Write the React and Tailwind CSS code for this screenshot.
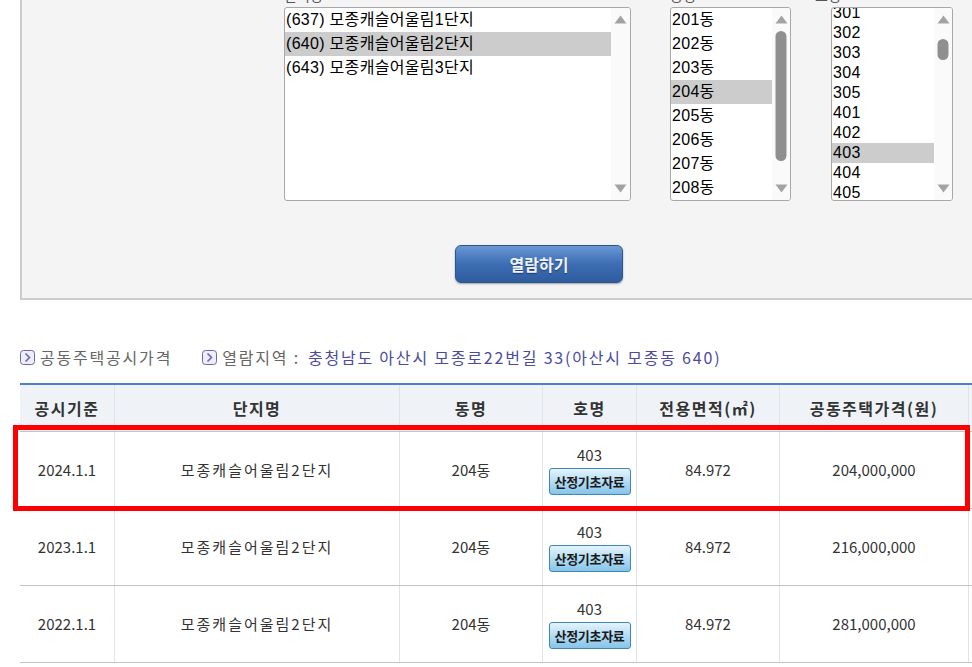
import React from "react";

const KR = { fontFamily: '"Liberation Sans", "Noto Sans CJK KR", sans-serif' };
const KR2 = { fontFamily: '"Noto Sans CJK KR", "Liberation Sans", sans-serif' };

function Up() {
  return (
    <svg width="13" height="9" viewBox="0 0 13 9">
      <polygon points="6.5,0.5 12.5,8.5 0.5,8.5" fill="#a3a3a3" />
    </svg>
  );
}
function Down() {
  return (
    <svg width="13" height="9" viewBox="0 0 13 9">
      <polygon points="0.5,0.5 12.5,0.5 6.5,8.5" fill="#a3a3a3" />
    </svg>
  );
}

function ListBox({ width, contentW, items, rowH, selected, offset = 0, thumb }) {
  return (
    <div
      className="relative flex h-[194px] overflow-hidden rounded-[3px] border border-[#a8a8a8] bg-white"
      style={{ width }}
    >
      <div className="overflow-hidden" style={{ width: contentW }}>
        <div style={{ marginTop: -offset }}>
          {items.map((it) => (
            <div
              key={it}
              className={`whitespace-nowrap pl-px text-[16px] tracking-[0.3px] text-black ${it === selected ? "bg-[#cccccc]" : ""}`}
              style={{ height: rowH, lineHeight: rowH + "px", ...KR }}
            >
              {it}
            </div>
          ))}
        </div>
      </div>
      <div className="relative flex flex-1 flex-col items-center justify-between bg-[#fafafa] py-[7px]">
        <Up />
        {thumb && (
          <div
            className="absolute left-1/2 w-[11px] -translate-x-1/2 rounded-full bg-[#8f8f8f]"
            style={{ top: thumb[0], height: thumb[1] }}
          />
        )}
        <Down />
      </div>
    </div>
  );
}

function TitleIcon() {
  return (
    <svg width="15" height="15" viewBox="0 0 15 15" className="shrink-0">
      <rect x="0.5" y="0.5" width="14" height="14" rx="3" fill="#eeeefa" stroke="#6c66b0" />
      <polyline points="5.5,3.5 9.5,7.5 5.5,11.5" fill="none" stroke="#6c66b0" strokeWidth="1.6" />
    </svg>
  );
}

const cols = "grid grid-cols-[95px_285px_143px_94px_143px_189px]";

function Row({ date, price }) {
  const cell = "flex items-center justify-center border-r border-[#dfe4ea] text-[15px] text-[#333]";
  return (
    <div className={`${cols} h-[77px] border-b border-[#c4c4c4]`} style={KR2}>
      <div className={cell}>{date}</div>
      <div className={`${cell} tracking-[2px]`}>모종캐슬어울림2단지</div>
      <div className={cell}>204동</div>
      <div className={`${cell} flex-col`}>
        <div className="leading-[20px]">403</div>
        <div className="mt-[3px] flex h-[27px] w-[82px] items-center justify-center rounded-[3px] border border-[#3f86bb] bg-gradient-to-b from-[#e4f4fd] via-[#b4dcf3] to-[#86c4e8] text-[13px] font-bold tracking-[-0.3px] text-[#1a1a1a]">
          산정기초자료
        </div>
      </div>
      <div className={cell}>84.972</div>
      <div className={cell}>{price}</div>
    </div>
  );
}

export default function App() {
  const head = "flex items-center justify-center border-r border-[#dfe4ea] text-[16px] font-bold text-[#333] tracking-[1.5px]";
  return (
    <div className="relative h-[667px] w-[972px] overflow-hidden bg-white">
      {/* top panel */}
      <div className="ml-[20px] mt-[-13px] w-[1000px] border-b-2 border-l-2 border-[#cccccc] bg-[#f4f4f4] pb-[15px]">
        <div className="ml-[262px] flex gap-[39px]">
          <div>
            <div className="h-[20px] text-[14px] leading-[16px] text-[#555]" style={KR2}>단지명</div>
            <ListBox
              width={347}
              contentW={326}
              rowH={24}
              items={["(637) 모종캐슬어울림1단지", "(640) 모종캐슬어울림2단지", "(643) 모종캐슬어울림3단지"]}
              selected="(640) 모종캐슬어울림2단지"
            />
          </div>
          <div>
            <div className="h-[20px] text-[14px] leading-[16px] text-[#555]" style={KR2}>동명</div>
            <ListBox
              width={121}
              contentW={101}
              rowH={24}
              items={["201동", "202동", "203동", "204동", "205동", "206동", "207동", "208동"]}
              selected="204동"
              thumb={[23, 130]}
            />
          </div>
          <div className="ml-px">
            <div className="-ml-[16px] h-[20px] text-[14px] leading-[16px] text-[#555]" style={KR2}>호명</div>
            <ListBox
              width={122}
              contentW={102}
              rowH={20}
              offset={5}
              items={["301", "302", "303", "304", "305", "401", "402", "403", "404", "405", "406"]}
              selected="403"
              thumb={[31, 21]}
            />
          </div>
        </div>
        <div className="ml-[433px] mt-[44px] flex h-[38px] w-[168px] items-center justify-center rounded-[6px] border border-[#2c548f] bg-gradient-to-b from-[#6a98d4] via-[#3d6db3] to-[#2f5c9f] shadow-[0_1px_2px_rgba(0,0,0,0.35)]">
          <span className="text-[16px] font-bold text-[#eef2fa] [text-shadow:0_1px_1px_rgba(0,0,0,0.4)]" style={KR2}>
            열람하기
          </span>
        </div>
      </div>

      {/* title */}
      <div className="ml-[20px] mt-[47px] flex h-[20px] items-center whitespace-nowrap text-[16px] tracking-[1.8px]" style={KR2}>
        <TitleIcon />
        <span className="ml-[5px] text-[#666]">공동주택공시가격</span>
        <span className="ml-[30px]"><TitleIcon /></span>
        <span className="ml-[5px] text-[#666]">열람지역 :</span>
        <span className="ml-[8px] text-[#4b4b9e]">충청남도 아산시 모종로22번길 33(아산시 모종동 640)</span>
      </div>

      {/* table */}
      <div className="ml-[20px] mt-[16px] w-[952px] border-t-2 border-[#4a7ed6]">
        <div className={`${cols} h-[47px] border-b border-[#c4c4c4] bg-[#eff3f8]`} style={KR2}>
          <div className={head}>공시기준</div>
          <div className={head}>단지명</div>
          <div className={head}>동명</div>
          <div className={head}>호명</div>
          <div className={head}>전용면적(㎡)</div>
          <div className={head}>공동주택가격(원)</div>
        </div>
        <Row date="2024.1.1" price="204,000,000" />
        <Row date="2023.1.1" price="216,000,000" />
        <Row date="2022.1.1" price="281,000,000" />
      </div>

      {/* red highlight overlay */}
      <div className="pointer-events-none absolute left-[13px] top-[425px] h-[86px] w-[957px] border-[5px] border-[#ff0000]" />
    </div>
  );
}
